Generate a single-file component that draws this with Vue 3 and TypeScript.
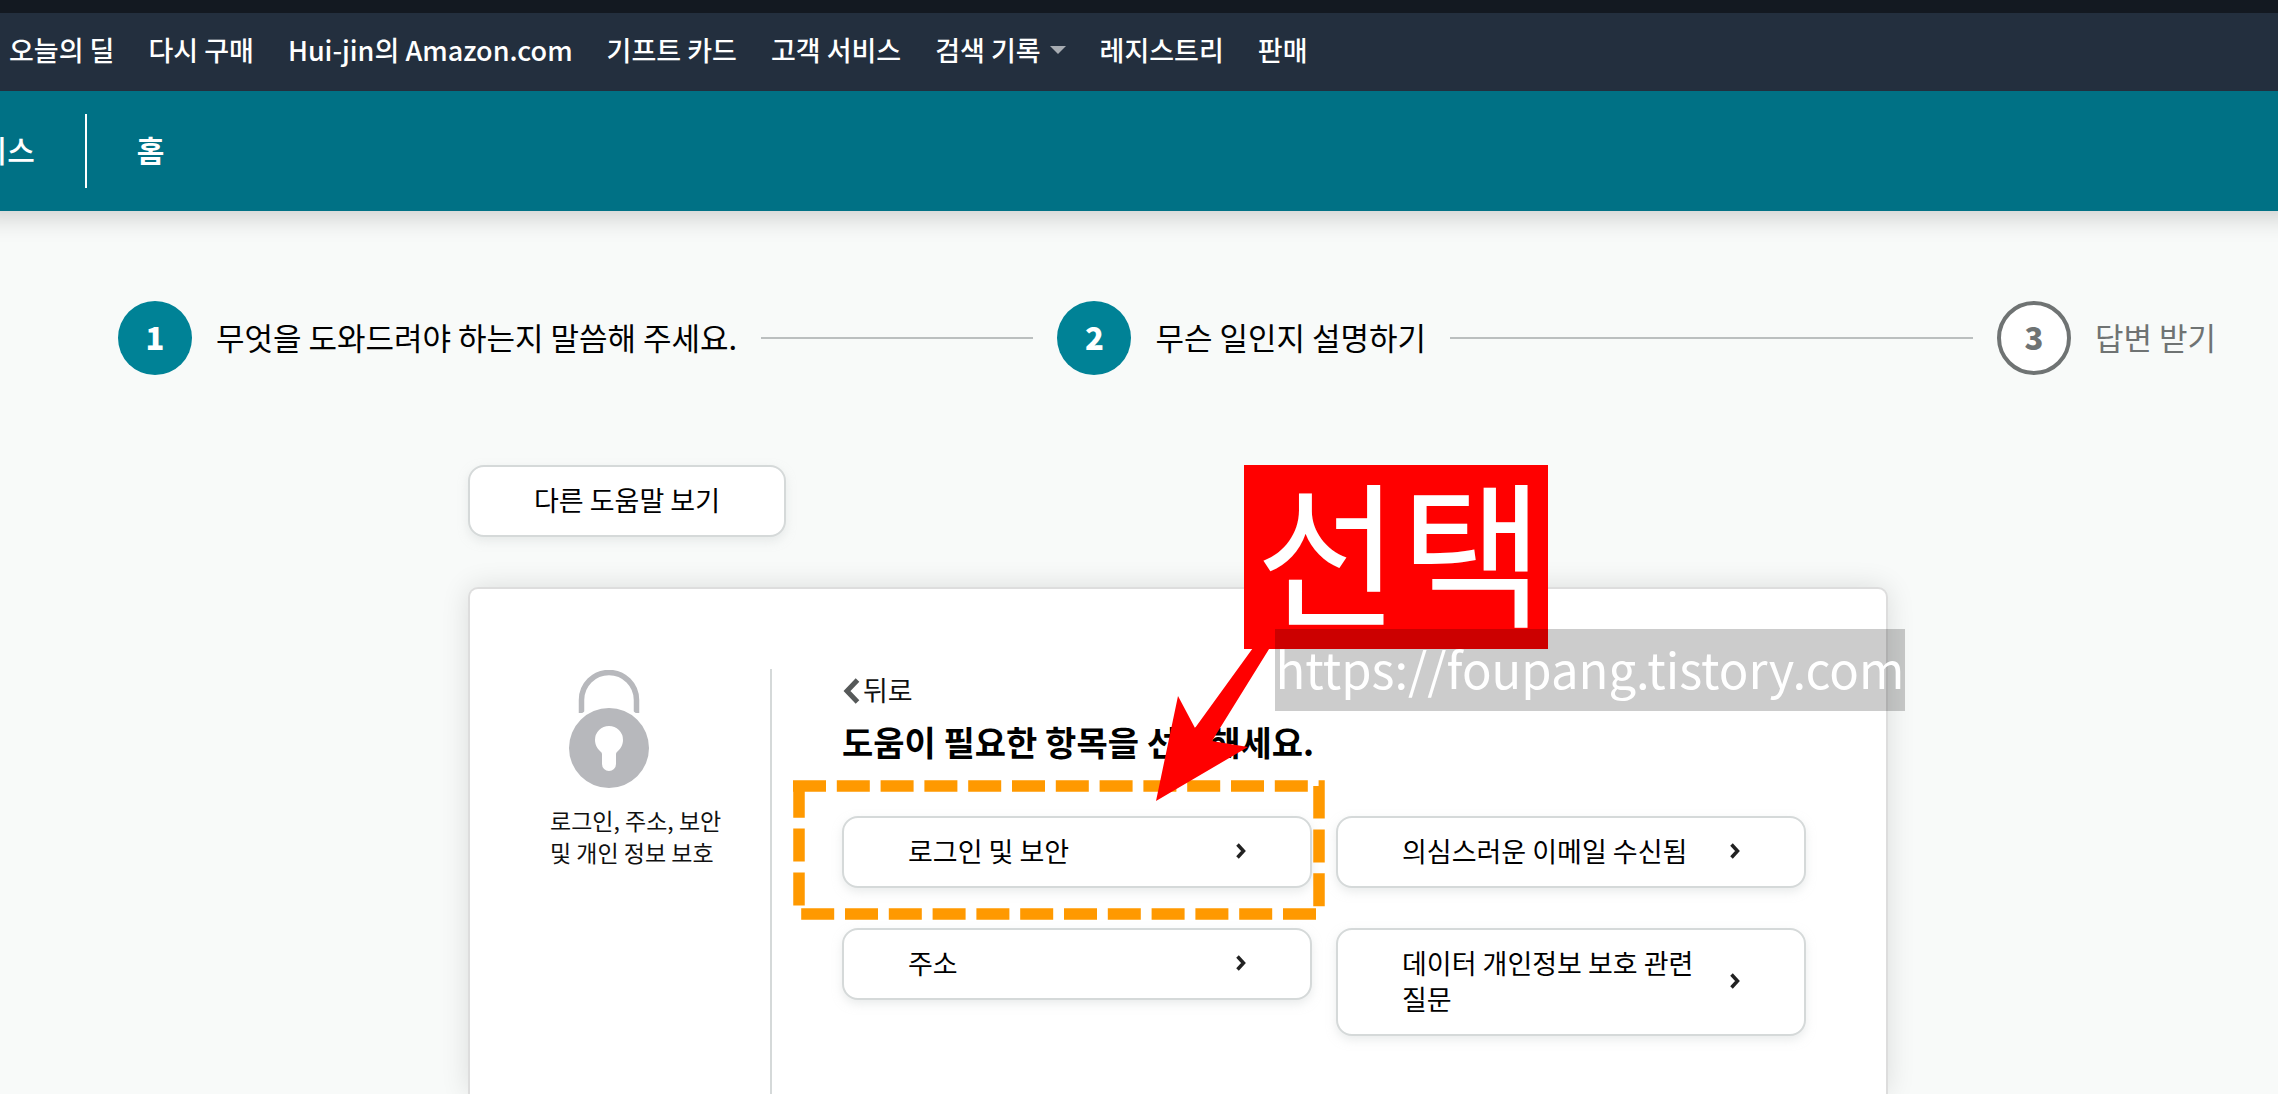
<script setup lang="ts">
interface NavItem {
  label: string
  menu?: boolean
}

interface Step {
  label: string
  done: boolean
}

const navItems: NavItem[] = [
  { label: '오늘의 딜' },
  { label: '다시 구매' },
  { label: 'Hui-jin의 Amazon.com' },
  { label: '기프트 카드' },
  { label: '고객 서비스' },
  { label: '검색 기록', menu: true },
  { label: '레지스트리' },
  { label: '판매' },
]

const steps: Step[] = [
  { label: '무엇을 도와드려야 하는지 말씀해 주세요.', done: true },
  { label: '무슨 일인지 설명하기', done: true },
  { label: '답변 받기', done: false },
]

const topics: string[] = [
  '로그인 및 보안',
  '의심스러운 이메일 수신됨',
  '주소',
  '데이터 개인정보 보호 관련 질문',
]
</script>

<template>
  <div class="page">
    <header class="header">
      <nav class="main-nav">
        <a v-for="item in navItems" :key="item.label" href="#" class="nav-link">
          {{ item.label }}<span v-if="item.menu" class="caret"></span>
        </a>
      </nav>
      <nav class="sub-nav">
        <a href="#" class="sub-link">고객 서비스</a>
        <span class="sub-divider"></span>
        <a href="#" class="sub-link current">홈</a>
      </nav>
    </header>

    <ol class="steps">
      <li v-for="(step, i) in steps" :key="step.label" class="step" :class="{ pending: !step.done }">
        <span class="step-number">{{ i + 1 }}</span>
        <span class="step-label">{{ step.label }}</span>
        <span v-if="i < steps.length - 1" class="step-line"></span>
      </li>
    </ol>

    <main class="content">
      <button type="button" class="box-button other-help">다른 도움말 보기</button>

      <section class="card">
        <aside class="category">
          <svg class="lock" width="80" height="118" viewBox="0 0 80 118" aria-hidden="true">
            <path d="M12.500 43V30a27.500 27.500 0 0 1 55 0V43" fill="none" stroke="#b7b8bc" stroke-width="5.500" />
            <circle cx="40" cy="78" r="44" fill="#fff" />
            <path
              fill="#b7b8bc"
              fill-rule="evenodd"
              d="M40 38a40 40 0 1 1 0 80a40 40 0 1 1 0-80zM40 56a14 14 0 0 0-14 14c0 5 2.500 9 6 12c.8.700 1 1.500 1 2.500V94a7 7 0 0 0 14 0V84.500c0-1 .2-1.800 1-2.500c3.500-3 6-7 6-12a14 14 0 0 0-14-14z"
            />
          </svg>
          <p class="category-name">로그인, 주소, 보안 및 개인 정보 보호</p>
        </aside>

        <div class="picker">
          <a href="#" class="back">
            <svg width="18" height="26" viewBox="0 0 18 26" aria-hidden="true">
              <path d="M15.500 2L5 13l10.500 11" fill="none" stroke="#565959" stroke-width="5" />
            </svg>
            <span>뒤로</span>
          </a>
          <h1 class="title">도움이 필요한 항목을 선택해세요.</h1>
          <div class="topics">
            <button v-for="topic in topics" :key="topic" type="button" class="box-button topic">
              <span>{{ topic }}</span>
              <svg width="10" height="16" viewBox="0 0 10 16" aria-hidden="true">
                <path d="M1.500 1.500L7.500 8l-6 6.500" fill="none" stroke="#222" stroke-width="3.500" />
              </svg>
            </button>
          </div>
        </div>

        <!-- Guide marks laid over the card; origin is the card's corner -->
        <svg class="guide" width="900" height="360" viewBox="0 0 900 360" aria-hidden="true">
          <path
            d="M323 197H849V325H329V191"
            fill="none"
            stroke="#ff9900"
            stroke-width="11.500"
            stroke-dasharray="33 10.800"
          />
          <path d="M686 212L708 107L725 139L788 52H804L742 152L778 158Z" fill="#f00" />
        </svg>
        <strong class="pick-label">선택</strong>
        <span class="watermark">https://foupang.tistory.com</span>
      </section>
    </main>
  </div>
</template>

<style>
body {
  margin: 0;
  background: #f8faf9;
}
</style>

<style scoped>
.page {
  display: flex;
  flex-direction: column;
  height: 100vh;
  overflow: hidden;
  background: #f8faf9;
  color: #000;
  font-family: 'Noto Sans CJK KR', 'Noto Sans', sans-serif;
  font-size: 27px;
  line-height: 36px;
}

a {
  color: inherit;
  text-decoration: none;
}

.header {
  flex: none;
  border-top: 13px solid #131921;
  box-shadow: 0 -18px 24px 24px rgba(0, 0, 0, 0.18);
  color: #fff;
  font-weight: 500;
}

.main-nav {
  display: flex;
  align-items: center;
  gap: 34px;
  height: 78px;
  padding-left: 9px;
  background: #232f3e;
  white-space: nowrap;
}

.nav-link {
  display: flex;
  align-items: center;
  padding-bottom: 4px;
}

.caret {
  margin-left: 9px;
  border: 8px solid transparent;
  border-top-color: #a7acb2;
  border-bottom: 0;
}

.sub-nav {
  display: flex;
  align-items: center;
  gap: 50px;
  height: 120px;
  margin-left: -110px;
  background: #007185;
  font-size: 30px;
  white-space: nowrap;
}

.sub-link {
  padding-bottom: 4px;
}

.sub-link.current {
  font-weight: 700;
}

.sub-divider {
  width: 2px;
  height: 74px;
  background: #fff;
}

.steps {
  display: flex;
  flex: none;
  margin: 0;
  padding: 90px 62px 0 118px;
  list-style: none;
  font-size: 31px;
}

.step {
  display: flex;
  flex: 1;
  align-items: center;
  gap: 24px;
  white-space: nowrap;
}

.step.pending {
  flex: none;
  color: #6f7373;
}

.step-number {
  display: flex;
  flex: none;
  align-items: center;
  justify-content: center;
  box-sizing: border-box;
  width: 74px;
  height: 74px;
  padding-bottom: 2px;
  border-radius: 50%;
  background: #008296;
  color: #fff;
  font-weight: 900;
}

.pending .step-number {
  border: 4px solid #6f7373;
  background: #fff;
  color: #6f7373;
}

.step-label {
  padding-bottom: 2px;
}

.step-line {
  flex: 1;
  height: 2px;
  margin-right: 24px;
  background: #bbbfbf;
}

.content {
  display: flex;
  flex: 1;
  flex-direction: column;
  margin: 90px 390px 0 468px;
}

.box-button {
  box-sizing: border-box;
  padding: 15px 64px 17px;
  border: 2px solid #d5d9d9;
  border-radius: 16px;
  background: #fff;
  box-shadow: 0 4px 10px rgba(213, 217, 217, 0.5);
  color: #000;
  font: inherit;
  cursor: pointer;
}

.other-help {
  align-self: flex-start;
}

.card {
  position: relative;
  display: flex;
  flex: 1 0 auto;
  margin-top: 50px;
  padding: 80px 80px 0 0;
  border: 2px solid #ddd;
  border-bottom: 0;
  border-radius: 10px 10px 0 0;
  background: #fff;
  box-shadow: 0 0 28px rgba(0, 0, 0, 0.12);
}

.category {
  box-sizing: border-box;
  flex: none;
  width: 300px;
  padding: 0 40px 0 80px;
}

.lock {
  display: block;
  margin: 1px 0 16px 19px;
}

.category-name {
  margin: 0;
  color: #111;
  font-size: 23px;
  line-height: 32px;
  word-break: keep-all;
}

.picker {
  flex: 1;
  padding-left: 70px;
  border-left: 2px solid #d5d9d9;
}

.back {
  display: flex;
  align-items: center;
  gap: 3px;
  height: 44px;
  color: #111;
}

.back span {
  padding-bottom: 2px;
}

.title {
  margin: 0 0 45px;
  font-size: 34px;
  font-weight: 700;
  line-height: 58px;
}

.topics {
  display: grid;
  grid-template-columns: 1fr 1fr;
  align-items: start;
  gap: 40px 24px;
}

.topic {
  display: flex;
  align-items: center;
  justify-content: space-between;
  gap: 32px;
  text-align: left;
  word-break: keep-all;
}

.topic svg {
  flex: none;
}

.guide {
  position: absolute;
  top: 0;
  left: 0;
  pointer-events: none;
}

.pick-label {
  position: absolute;
  top: -124px;
  left: 774px;
  box-sizing: border-box;
  width: 304px;
  padding: 0 0 20px 8px;
  background: #f00;
  color: #fff;
  font-size: 157px;
  font-weight: 400;
  line-height: 164px;
  text-align: center;
}

.watermark {
  position: absolute;
  top: 40px;
  left: 805px;
  box-sizing: border-box;
  width: 630px;
  padding-bottom: 4px;
  background: rgba(0, 0, 0, 0.2);
  color: #fff;
  font-size: 49px;
  line-height: 78px;
  text-align: center;
  white-space: nowrap;
}
</style>
